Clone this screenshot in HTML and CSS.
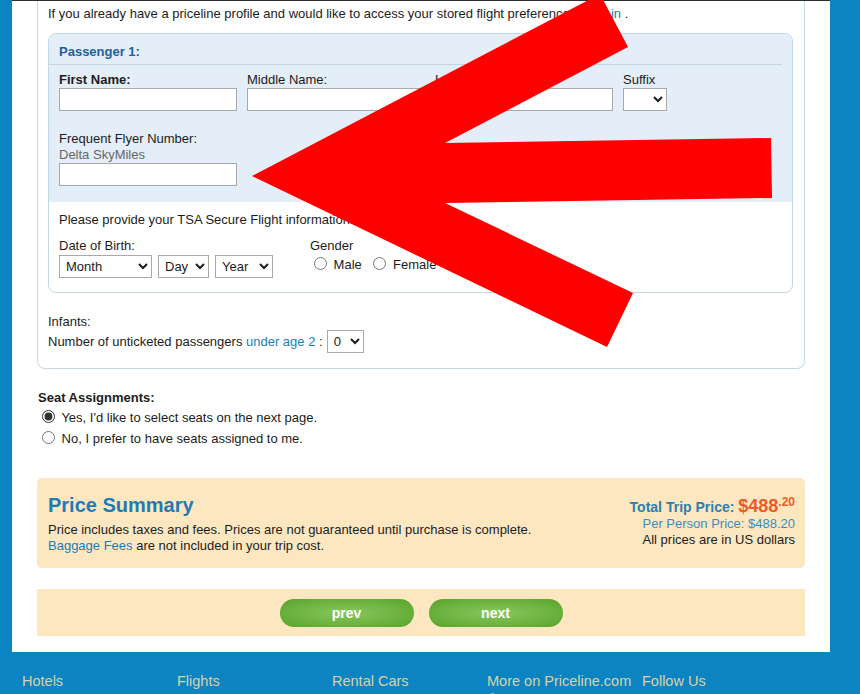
FILE: index.html
```html
<!DOCTYPE html>
<html lang="en">
<head>
    <meta charset="UTF-8">
    <meta name="viewport" content="width=device-width, initial-scale=1.0">
    <title>Passenger Information - Priceline</title>
    <link rel="stylesheet" href="styles.css">
</head>
<body>
    <div class="page">
        <div class="form-box">
            <p class="intro">If you already have a priceline profile and would like to access your stored flight preferences, <a href="#">sign in</a> .</p>

            <div class="pax">
                <div class="pax-top">
                    <h3>Passenger 1:</h3>
                    <div class="name-row">
                        <label class="field"><strong>First Name:</strong><input type="text" class="txt"></label>
                        <label class="field">Middle Name:<input type="text" class="txt"></label>
                        <label class="field">Last Name:<input type="text" class="txt"></label>
                        <label class="field">Suffix<select class="sel suffix"><option></option><option>Jr.</option><option>Sr.</option></select></label>
                    </div>
                    <div class="ff">
                        <div>Frequent Flyer Number:</div>
                        <div class="muted">Delta SkyMiles</div>
                        <input type="text" class="txt">
                    </div>
                </div>
                <div class="pax-bottom">
                    <p>Please provide your TSA Secure Flight information.</p>
                    <div class="dob-row">
                        <div class="dob">
                            <div>Date of Birth:</div>
                            <div class="dob-selects">
                                <select class="sel month"><option>Month</option></select>
                                <select class="sel day"><option>Day</option></select>
                                <select class="sel year"><option>Year</option></select>
                            </div>
                        </div>
                        <div class="gender">
                            <div>Gender</div>
                            <label><input type="radio" name="gender"> Male</label>
                            <label><input type="radio" name="gender"> Female</label>
                        </div>
                    </div>
                </div>
            </div>

            <div class="infants">
                <div>Infants:</div>
                <div class="infant-row">Number of unticketed passengers&nbsp;<a href="#">under age 2</a>&nbsp;: <select class="sel count"><option>0</option><option>1</option></select></div>
            </div>
        </div>

        <div class="seats">
            <div class="seats-title">Seat Assignments:</div>
            <label><input type="radio" name="seats" checked> Yes, I'd like to select seats on the next page.</label>
            <label><input type="radio" name="seats"> No, I prefer to have seats assigned to me.</label>
        </div>

        <div class="price">
            <div>
                <h2>Price Summary</h2>
                <p>Price includes taxes and fees. Prices are not guaranteed until purchase is complete.</p>
                <p><a href="#">Baggage Fees</a> are not included in your trip cost.</p>
            </div>
            <div class="totals">
                <div class="total-line">Total Trip Price: <span class="amount">$488<span class="cents">.20</span></span></div>
                <div class="per-person">Per Person Price: $488.20</div>
                <div>All prices are in US dollars</div>
            </div>
        </div>

        <div class="actions">
            <button class="btn">prev</button>
            <button class="btn">next</button>
        </div>
    </div>

    <div class="footer">
        <a href="#">Hotels</a>
        <a href="#">Flights</a>
        <a href="#">Rental Cars</a>
        <a href="#">More on Priceline.com<br>&copy;</a>
        <a href="#">Follow Us</a>
    </div>

    <!-- annotation arrow drawn over the form -->
    <svg class="arrow" width="860" height="694" viewBox="0 0 860 694">
        <polygon points="252,176 600,-6 628,47 445,143 771,138 772,198 445,203 633,293 607,347" fill="#ff0000"/>
    </svg>
</body>
</html>
```

FILE: styles.css
```css
body {
    margin: 0;
    background-color: #0c84c2;
    font-family: "Liberation Sans", Arial, sans-serif;
    font-size: 13px;
    color: #1c1c1c;
    position: relative;
    height: 694px;
    overflow: hidden;
}
a {
    color: #1b7cb5;
    text-decoration: none;
}
input[type="radio"] {
    accent-color: #333;
}
.page {
    margin-left: 12px;
    width: 768px;
    padding: 0 25px 16px;
    background: #fff;
    border-top: 1px solid #2e2e2e;
}
.form-box {
    border: 1px solid #c4d8e5;
    border-top: 0;
    border-radius: 0 0 8px 8px;
    padding: 3px 11px 15px 10px;
}
.intro {
    margin: 0 0 9px;
    line-height: 20px;
}
.pax {
    border: 1px solid #c3d6e4;
    border-radius: 8px;
    overflow: hidden;
}
.pax-top {
    background: #e3eef8;
    padding: 0 0 16px 10px;
}
.pax h3 {
    margin: 0 10px 0 -10px;
    padding: 8px 0 2px 10px;
    font-size: 13px;
    line-height: 20px;
    color: #22609a;
    border-bottom: 1px solid #c2d5e3;
}
.name-row {
    display: flex;
    gap: 10px;
    margin-top: 7px;
}
.field {
    display: flex;
    flex-direction: column;
    line-height: 16px;
}
.txt {
    width: 178px;
    height: 23px;
    box-sizing: border-box;
    border: 1px solid #a9a9a9;
    margin: 0;
    padding: 1px 3px;
    font: inherit;
    background: #fff;
}
.sel {
    height: 23px;
    box-sizing: border-box;
    border: 1px solid #a9a9a9;
    border-radius: 0;
    margin: 0;
    padding: 0 2px;
    font: inherit;
    color: #1c1c1c;
    background: #fff;
}
.suffix { width: 44px; }
.month { width: 93px; }
.day { width: 51px; }
.year { width: 58px; }
.count { width: 37px; margin-left: 4px; }
.ff {
    margin-top: 20px;
    line-height: 16px;
}
.muted {
    color: #666;
}
.pax-bottom {
    padding: 10px 10px 14px;
}
.pax-bottom p {
    margin: 0;
    line-height: 16px;
}
.dob-row {
    display: flex;
    margin-top: 10px;
    line-height: 16px;
}
.dob {
    width: 251px;
}
.dob-selects {
    display: flex;
    gap: 6px;
    margin-top: 1px;
}
.gender input {
    margin: 3px 3px 0 4px;
    vertical-align: -1px;
}
.gender label {
    margin-right: 4px;
}
.infants {
    margin-top: 21px;
    line-height: 16px;
}
.infant-row {
    display: flex;
    align-items: center;
    height: 23px;
}
.seats {
    margin-top: 21px;
    padding-left: 1px;
    line-height: 16px;
}
.seats-title {
    font-weight: bold;
}
.seats label {
    display: block;
    line-height: 20px;
}
.seats input {
    margin: 3px 3px 0 4px;
    vertical-align: -1px;
}
.seats label:first-of-type {
    margin-top: 1px;
}
.price {
    display: flex;
    justify-content: space-between;
    background: #fde7c0;
    border-radius: 5px;
    padding: 16px 10px 14px 11px;
    margin-top: 29px;
}
.price h2 {
    margin: 0 0 6px;
    font-size: 20px;
    line-height: 22px;
    color: #1f7bb5;
}
.price p {
    margin: 0;
    line-height: 16px;
}
.totals {
    text-align: right;
    margin-top: 4px;
    line-height: 16px;
}
.total-line {
    line-height: 17px;
    font-weight: bold;
    font-size: 14px;
    color: #2b7fae;
}
.amount {
    color: #ee5a2a;
    font-size: 18px;
    line-height: 17px;
}
.cents {
    font-size: 12px;
    line-height: 0;
    vertical-align: 6px;
}
.per-person {
    color: #3a8cc0;
}
.actions {
    display: flex;
    justify-content: center;
    gap: 15px;
    margin-top: 21px;
    padding: 10px 0 9px;
    background: #fde7c0;
}
.btn {
    width: 134px;
    height: 28px;
    border: none;
    border-radius: 14px;
    background: radial-gradient(ellipse at center, #88c75c 0%, #6cb23f 60%, #58a02c 100%);
    color: #fff;
    font-family: "Liberation Sans", Arial, sans-serif;
    font-weight: bold;
    font-size: 14px;
    cursor: pointer;
}
.footer {
    display: flex;
    padding: 20px 0 0 22px;
}
.footer a {
    width: 155px;
    color: #d8d2a6;
    font-size: 14.5px;
    line-height: 18px;
}
.arrow {
    position: absolute;
    top: 0;
    left: 0;
    pointer-events: none;
}
```
